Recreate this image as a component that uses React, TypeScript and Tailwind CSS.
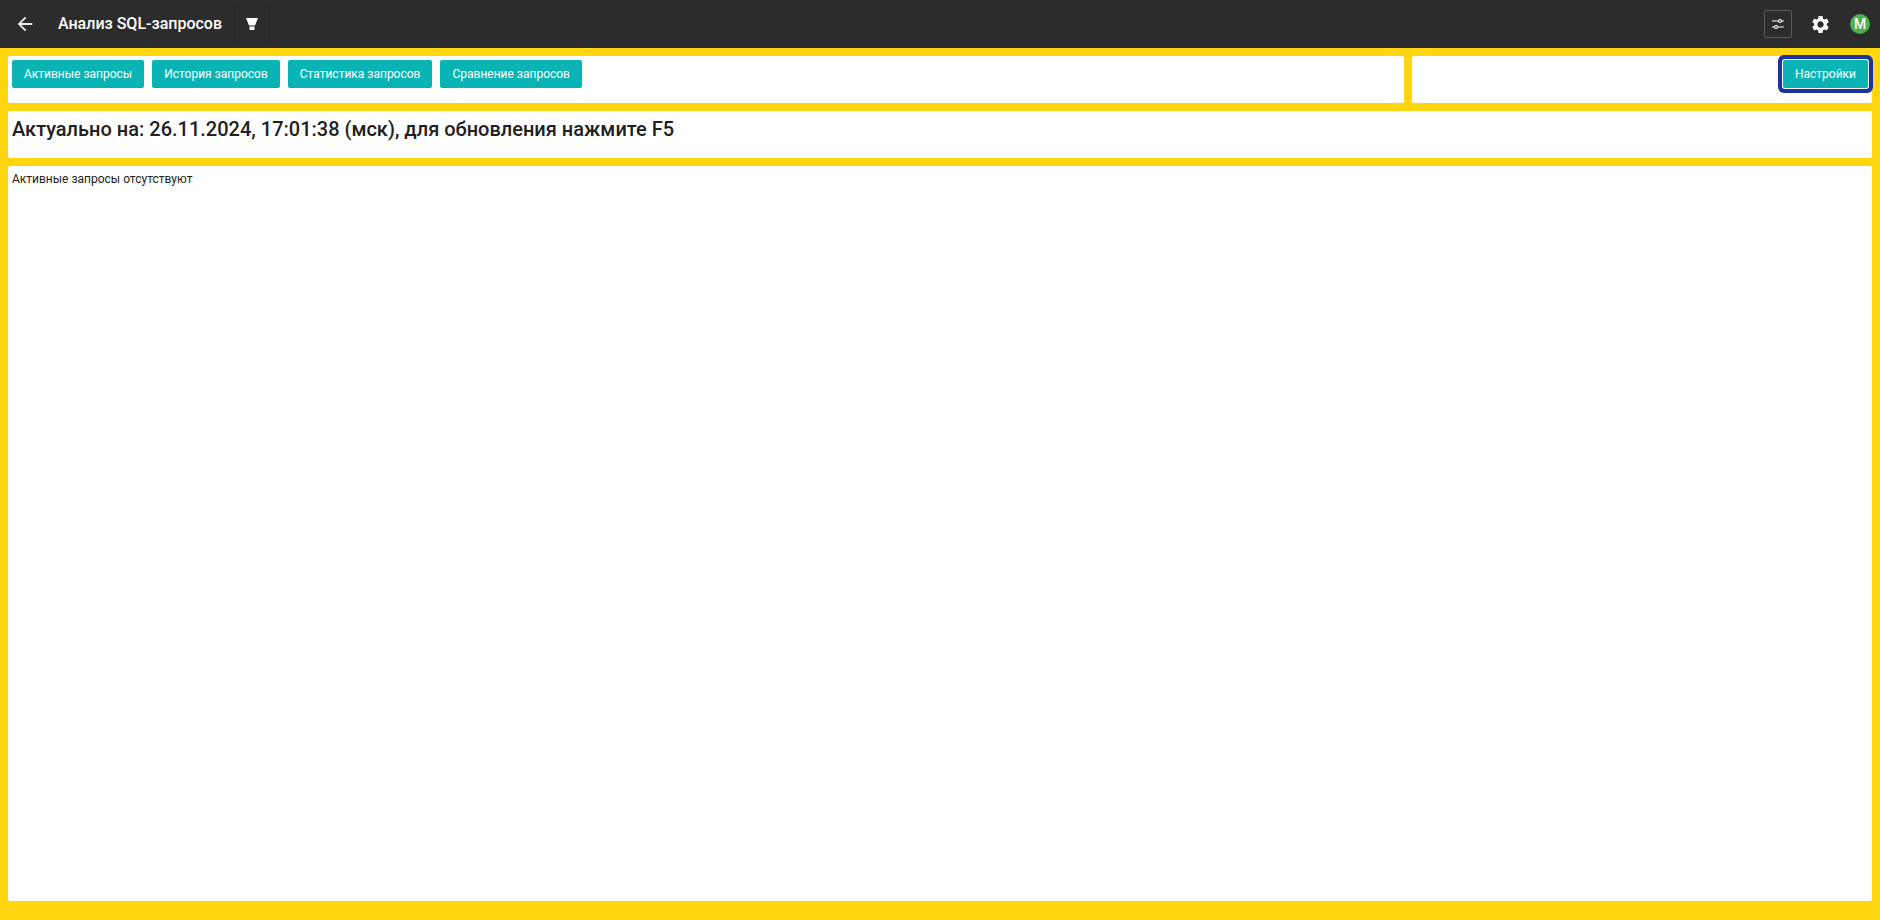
import { MdArrowBack, MdSettings } from "react-icons/md";

const tabs = ["Активные запросы", "История запросов", "Статистика запросов", "Сравнение запросов"];

function TealButton({ label, focused }: { label: string; focused?: boolean }) {
  return (
    <button
      className={
        "h-7 rounded-[2px] bg-[#0bb4b4] px-3 text-xs text-white " +
        (focused ? "shadow-[0_0_0_1px_#fff,0_0_0_5px_#1c3399]" : "")
      }
    >
      {label}
    </button>
  );
}

export default function App() {
  return (
    <div className="flex h-[920px] flex-col bg-[#ffd60f] font-['Roboto',sans-serif] text-[#212121]">
      <header className="flex h-12 items-center bg-[#2c2c2c] text-white">
        <MdArrowBack className="ml-[14px] h-[22px] w-[22px] text-[#eeeeee]" />
        <h1 className="ml-[22px] text-base font-medium">Анализ SQL-запросов</h1>
        <div className="ml-[12px] flex h-[36px] w-[36px] items-center justify-center border-x border-[#222222]">
          <svg viewBox="0 0 12 12" className="h-[12px] w-[12px]" fill="#fff">
            <path d="M0 0h12L9 7.500H3zM3.500 8.500h5V12h-5z" />
          </svg>
        </div>
        <div className="ml-auto flex items-center">
          <div className="flex h-7 w-7 items-center justify-center rounded-[2px] border border-[#5a5a5a]">
            <svg viewBox="0 0 14 14" className="h-[14px] w-[14px]" fill="none" stroke="#fff" strokeWidth="1.200">
              <path d="M1 4h6.500M10.500 4H13M1 10h2.500M6.500 10H13" />
              <circle cx="9" cy="4" r="1.500" />
              <circle cx="5" cy="10" r="1.500" />
            </svg>
          </div>
          <MdSettings className="ml-[18px] h-[21px] w-[21px] text-white" />
          <div className="mr-[10px] ml-[19px] flex h-5 w-5 items-center justify-center rounded-full bg-[#4caf50] text-sm font-medium text-white">
            M
          </div>
        </div>
      </header>

      <main className="flex flex-1 flex-col gap-2 px-2 pt-2 pb-[19px]">
        <div className="flex h-[47px] gap-2">
          <div className="flex flex-1 items-start gap-2 rounded-[2px] bg-white p-1">
            {tabs.map((tab) => (
              <TealButton key={tab} label={tab} />
            ))}
          </div>
          <div className="flex w-[460px] items-start justify-end rounded-[2px] bg-white p-1">
            <TealButton label="Настройки" focused />
          </div>
        </div>

        <div className="h-[47px] rounded-[2px] bg-white p-1">
          <h2 className="text-xl leading-[28px] font-medium">
            Актуально на: 26.11.2024, 17:01:38 (мск), для обновления нажмите F5
          </h2>
        </div>

        <div className="flex-1 rounded-[2px] bg-white px-1 pt-[6px] text-xs leading-[14px]">
          Активные запросы отсутствуют
        </div>
      </main>
    </div>
  );
}
